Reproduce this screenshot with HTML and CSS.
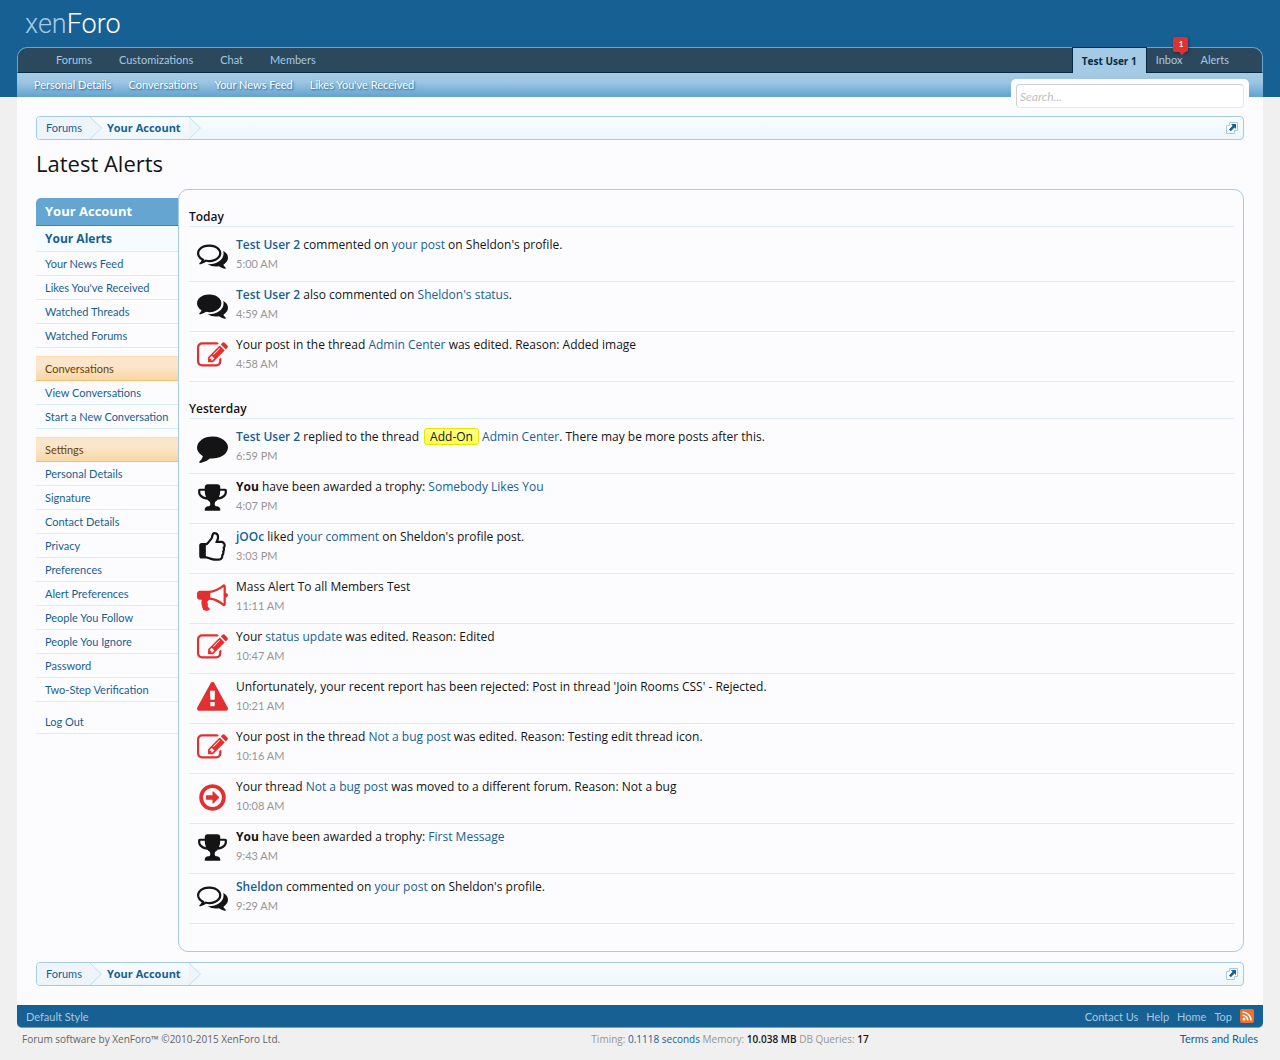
FILE: index.html
```html
<!DOCTYPE html>
<html lang="en">
<head>
<meta charset="utf-8">
<title>Latest Alerts | XenForo</title>
<link rel="stylesheet" href="styles.css">
</head>
<body>
<svg class="sprite" aria-hidden="true">
  <symbol id="comments-o" viewBox="0 0 1792 1792"><path d="M704 384q-153 0-286 52t-211.500 141-78.500 191q0 82 53 158t149 132l97 56-35 84q34-20 62-39l44-31 53 10q78 14 153 14 153 0 286-52t211.500-141 78.500-191-78.500-191-211.500-141-286-52zm0-128q191 0 353.500 68.500t256.500 186.500 94 257-94 257-256.500 186.500-353.500 68.500q-86 0-176-16-124 88-278 128-36 9-86 16h-3q-11 0-20.500-8t-11.500-21q-1-3-1-6.500t.5-6.500 2-6l2.500-5 3.500-5.500 4-5 4.500-5 4-4.500q5-6 23-25t26-29.500 22.500-29 25-38.500 20.500-44q-124-72-195-177t-71-224q0-139 94-257t256.500-186.500 353.500-68.500zm822 1169q10 24 20.500 44t25 38.500 22.500 29 26 29.500 23 25q1 1 4 4.500t4.500 5 4 5 3.500 5.500l2.500 5 2 6 .5 6.500-1 6.500q-3 14-13 22t-22 7q-50-7-86-16-154-40-278-128-90 16-176 16-271 0-472-132 58 4 88 4 161 0 309-45t264-129q125-92 192-212t67-254q0-77-23-152 129 71 204 178t75 230q0 120-71 224.500t-195 176.500z"/></symbol>
  <symbol id="comments" viewBox="0 0 1792 1792"><path d="M1408 768q0 139-94 257t-256.500 186.500-353.500 68.500q-86 0-176-16-124 88-278 128-36 9-86 16h-3q-11 0-20.500-8t-11.500-21q-1-3-1-6.500t.5-6.500 2-6l2.500-5 3.500-5.500 4-5 4.500-5 4-4.500q5-6 23-25t26-29.500 22.500-29 25-38.500 20.500-44q-124-72-195-177t-71-224q0-139 94-257t256.500-186.500 353.500-68.500 353.500 68.500 256.500 186.500 94 257zm384 256q0 120-71 224.500t-195 176.500q10 24 20.500 44t25 38.500 22.500 29 26 29.500 23 25q1 1 4 4.500t4.500 5 4 5 3.500 5.500l2.500 5 2 6 .5 6.500-1 6.500q-3 14-13 22t-22 7q-50-7-86-16-154-40-278-128-90 16-176 16-271 0-472-132 58 4 88 4 161 0 309-45t264-129q125-92 192-212t67-254q0-77-23-152 129 71 204 178t75 230z"/></symbol>
  <symbol id="comment" viewBox="0 0 1792 1792"><path d="M1792 896q0 174-120 321.500t-326 233-450 85.500q-70 0-145-8-198 175-460 242-49 14-114 22-17 2-30.500-9t-17.500-29v-1q-3-4-.5-12t2-10 4.500-9.500l6-9 7-8.500 8-9q7-8 31-34.500t34.500-38 31-39.500 32.500-51 27-59 26-76q-157-89-247.500-220t-90.500-281q0-130 71-248.500t191-204.500 286-136.500 348-50.500q244 0 450 85.500t326 233 120 321.500z"/></symbol>
  <symbol id="edit" viewBox="0 0 1792 1792"><path d="M888 1184l116-116-152-152-116 116v56h96v96h56zm440-720q-16-16-33 1l-350 350q-17 17-1 33t33-1l350-350q17-17 1-33zm80 594v190q0 119-84.500 203.500t-203.500 84.500h-832q-119 0-203.500-84.500t-84.500-203.500v-832q0-119 84.500-203.500t203.500-84.500h832q63 0 117 25 15 7 18 23 3 17-9 29l-49 49q-14 14-32 8-23-6-45-6h-832q-66 0-113 47t-47 113v832q0 66 47 113t113 47h832q66 0 113-47t47-113v-126q0-13 9-22l64-64q15-15 35-7t20 29zm-96-738l288 288-672 672h-288v-288zm444 132l-92 92-288-288 92-92q28-28 68-28t68 28l152 152q28 28 28 68t-28 68z"/></symbol>
  <symbol id="trophy" viewBox="0 0 1792 1792"><path d="M522 883q-74-162-74-371h-256v96q0 78 94.500 162t235.500 113zm1078-275v-96h-256q0 209-74 371 141-29 235.500-113t94.500-162zm128-128v128q0 71-41.500 143t-112 130-173 97.500-215.500 44.500q-42 54-95 95-38 34-52.500 72.500t-14.500 89.500q0 54 30.500 91t97.500 37q75 0 133.500 45.500t58.500 114.500v64q0 14-9 23t-23 9h-832q-14 0-23-9t-9-23v-64q0-69 58.500-114.500t133.500-45.500q67 0 97.500-37t30.500-91q0-51-14.500-89.500t-52.500-72.500q-53-41-95-95-113-5-215.500-44.500t-173-97.500-112-130-41.500-143v-128q0-40 28-68t68-28h288v-96q0-66 47-113t113-47h576q66 0 113 47t47 113v96h288q40 0 68 28t28 68z"/></symbol>
  <symbol id="thumbs-up" viewBox="0 0 1792 1792"><path d="M384 1344q0 26-19 45t-45 19-45-19-19-45 19-45 45-19 45 19 19 45zm1152-576q0-51-39-89.500t-89-38.500h-352q0-58 48-159.500t48-160.500q0-98-32-145t-128-47q-26 26-38 85t-30.500 125.500-59.500 109.500q-22 23-77 91-4 5-23 30t-31.500 41-34.500 42.500-40 44-38.500 35.500-40 27-35.500 9h-32v640h32q13 0 31.500 3t33 6.500 38 11 35 11.500 35.500 12.500 29 10.500q211 73 342 73h121q192 0 192-167 0-26-5-56 30-16 47.500-52.500t17.500-73.500-18-69q53-50 53-119 0-25-10-55.500t-25-47.500q32-1 53.500-47t21.500-81zm128-1q0 89-49 163 9 33 9 69 0 77-38 144 3 21 3 43 0 101-60 178 1 139-85 219.500t-227 80.500h-129q-96 0-189.500-22.500t-216.500-65.500q-116-40-138-40h-288q-53 0-90.500-37.500t-37.500-90.500v-640q0-53 37.500-90.500t90.500-37.500h274q36-24 137-155 58-75 107-128 24-25 35.500-85.500t30.500-126.500 62-108q39-37 90-37 84 0 151 32.500t102 101.500 35 186q0 93-48 192h176q104 0 180 76t76 179z"/></symbol>
  <symbol id="bullhorn" viewBox="0 0 1792 1792"><path d="M1664 640q53 0 90.500 37.500t37.500 90.500-37.500 90.500-90.500 37.500v384q0 52-38 90t-90 38q-417-347-812-380-58 19-91 66t-31 100.500 40 92.500q-20 33-23 65.500t6 58 33.500 55 48 50 61.500 50.500q-29 58-111.500 83t-168.500 11.500-132-55.500q-7-23-29.500-87.500t-32-94.500-23-89-15-101 3.500-98.500 22-110.500h-122q-66 0-113-47t-47-113v-192q0-66 47-113t113-47h480q435 0 896-384 52 0 90 38t38 90v384zm-128 604v-954q-394 302-768 343v270q377 42 768 341z"/></symbol>
  <symbol id="warning" viewBox="0 0 1792 1792"><path d="M1024 1375v-190q0-14-9.500-23.500t-22.500-9.500h-192q-13 0-22.500 9.500t-9.500 23.500v190q0 14 9.500 23.500t22.500 9.500h192q13 0 22.500-9.500t9.500-23.500zm-2-374l18-459q0-12-10-19-13-11-24-11h-220q-11 0-24 11-10 7-10 21l17 457q0 10 10 16.500t24 6.500h185q14 0 23.500-6.500t10.500-16.500zm-14-934l768 1408q35 63-2 126-17 29-46.500 46t-63.500 17h-1536q-34 0-63.500-17t-46.500-46q-37-63-2-126l768-1408q17-31 47-49t65-18 65 18 47 49z"/></symbol>
  <symbol id="moved" viewBox="0 0 1792 1792"><path d="M1280 896q0 14-9 23l-320 320q-9 9-23 9-13 0-22.500-9.500t-9.500-22.500v-192h-352q-13 0-22.500-9.500t-9.500-22.500v-192q0-13 9.500-22.500t22.500-9.500h352v-192q0-14 9-23t23-9q12 0 24 10l319 319q9 9 9 23zm160 0q0-148-73-273t-198-198-273-73-273 73-198 198-73 273 73 273 198 198 273 73 273-73 198-198 73-273zm224 0q0 209-103 385.500t-279.500 279.500-385.500 103-385.500-103-279.500-279.500-103-385.500 103-385.500 279.500-279.500 385.500-103 385.500 103 279.500 279.500 103 385.500z"/></symbol>
  <symbol id="chevron" viewBox="0 0 12 22"><path d="M0 0L11.500 11L0 22z" fill="#edf5fb"/><path d="M0 0L11.500 11L0 22" fill="none" stroke="#c3def0"/></symbol>
  <symbol id="popout" viewBox="0 0 14 14"><path d="M4.500 4.500h-3v8h8v-3M4.500 4.500v-3h8v8h-3" fill="#fcfeff" stroke="#a5cae4"/><path d="M6 3h5v5L9.500 6.500 5.800 10.200 4 8.400 7.600 4.700z" fill="#176093"/></symbol>
</svg>

<header class="header">
  <a class="logo" href="#">xen<span>Foro</span></a>
  <nav class="navigation">
    <div class="tabs">
      <ul class="tab-list">
        <li><a href="#">Forums</a></li>
        <li><a href="#">Customizations</a></li>
        <li><a href="#">Chat</a></li>
        <li><a href="#">Members</a></li>
      </ul>
      <ul class="tab-list visitor">
        <li class="selected"><a href="#">Test User 1</a></li>
        <li><a href="#">Inbox</a><strong class="balloon">1</strong></li>
        <li><a href="#">Alerts</a></li>
      </ul>
    </div>
    <ul class="sub-links">
      <li><a href="#">Personal Details</a></li>
      <li><a href="#">Conversations</a></li>
      <li><a href="#">Your News Feed</a></li>
      <li><a href="#">Likes You've Received</a></li>
    </ul>
    <form class="search"><input type="search" placeholder="Search..." aria-label="Search"></form>
  </nav>
</header>

<main class="page">
  <nav class="breadcrumb" aria-label="Breadcrumb">
    <a href="#">Forums</a><svg class="chevron"><use href="#chevron"/></svg>
    <a class="current" href="#">Your Account</a><svg class="chevron"><use href="#chevron"/></svg>
    <a class="jump" href="#" aria-label="Open quick navigation"><svg><use href="#popout"/></svg></a>
  </nav>
  <h1>Latest Alerts</h1>
  <div class="columns">
    <aside class="sidebar">
      <h2>Your Account</h2>
      <ul>
        <li class="active"><a href="#">Your Alerts</a></li>
        <li><a href="#">Your News Feed</a></li>
        <li><a href="#">Likes You've Received</a></li>
        <li><a href="#">Watched Threads</a></li>
        <li><a href="#">Watched Forums</a></li>
      </ul>
      <h3>Conversations</h3>
      <ul>
        <li><a href="#">View Conversations</a></li>
        <li><a href="#">Start a New Conversation</a></li>
      </ul>
      <h3>Settings</h3>
      <ul>
        <li><a href="#">Personal Details</a></li>
        <li><a href="#">Signature</a></li>
        <li><a href="#">Contact Details</a></li>
        <li><a href="#">Privacy</a></li>
        <li><a href="#">Preferences</a></li>
        <li><a href="#">Alert Preferences</a></li>
        <li><a href="#">People You Follow</a></li>
        <li><a href="#">People You Ignore</a></li>
        <li><a href="#">Password</a></li>
        <li><a href="#">Two-Step Verification</a></li>
      </ul>
      <ul class="log-out">
        <li><a href="#">Log Out</a></li>
      </ul>
    </aside>
    <section class="panel">
      <h2>Today</h2>
      <ol>
        <li><svg class="icon"><use href="#comments-o"/></svg><div><p><a class="user" href="#">Test User 2</a> commented on <a href="#">your post</a> on Sheldon's profile.</p><time>5:00 AM</time></div></li>
        <li><svg class="icon"><use href="#comments"/></svg><div><p><a class="user" href="#">Test User 2</a> also commented on <a href="#">Sheldon's status</a>.</p><time>4:59 AM</time></div></li>
        <li><svg class="icon red"><use href="#edit"/></svg><div><p>Your post in the thread <a href="#">Admin Center</a> was edited. Reason: Added image</p><time>4:58 AM</time></div></li>
      </ol>
      <h2>Yesterday</h2>
      <ol>
        <li><svg class="icon"><use href="#comment"/></svg><div><p><a class="user" href="#">Test User 2</a> replied to the thread <span class="prefix">Add-On</span> <a href="#">Admin Center</a>. There may be more posts after this.</p><time>6:59 PM</time></div></li>
        <li><svg class="icon"><use href="#trophy"/></svg><div><p><b>You</b> have been awarded a trophy: <a href="#">Somebody Likes You</a></p><time>4:07 PM</time></div></li>
        <li><svg class="icon"><use href="#thumbs-up"/></svg><div><p><a class="user" href="#">jOOc</a> liked <a href="#">your comment</a> on Sheldon's profile post.</p><time>3:03 PM</time></div></li>
        <li><svg class="icon red"><use href="#bullhorn"/></svg><div><p>Mass Alert To all Members Test</p><time>11:11 AM</time></div></li>
        <li><svg class="icon red"><use href="#edit"/></svg><div><p>Your <a href="#">status update</a> was edited. Reason: Edited</p><time>10:47 AM</time></div></li>
        <li><svg class="icon red"><use href="#warning"/></svg><div><p>Unfortunately, your recent report has been rejected: Post in thread 'Join Rooms CSS' - Rejected.</p><time>10:21 AM</time></div></li>
        <li><svg class="icon red"><use href="#edit"/></svg><div><p>Your post in the thread <a href="#">Not a bug post</a> was edited. Reason: Testing edit thread icon.</p><time>10:16 AM</time></div></li>
        <li><svg class="icon red"><use href="#moved"/></svg><div><p>Your thread <a href="#">Not a bug post</a> was moved to a different forum. Reason: Not a bug</p><time>10:08 AM</time></div></li>
        <li><svg class="icon"><use href="#trophy"/></svg><div><p><b>You</b> have been awarded a trophy: <a href="#">First Message</a></p><time>9:43 AM</time></div></li>
        <li><svg class="icon"><use href="#comments-o"/></svg><div><p><a class="user" href="#">Sheldon</a> commented on <a href="#">your post</a> on Sheldon's profile.</p><time>9:29 AM</time></div></li>
      </ol>
    </section>
  </div>
  <nav class="breadcrumb" aria-label="Breadcrumb">
    <a href="#">Forums</a><svg class="chevron"><use href="#chevron"/></svg>
    <a class="current" href="#">Your Account</a><svg class="chevron"><use href="#chevron"/></svg>
    <a class="jump" href="#" aria-label="Open quick navigation"><svg><use href="#popout"/></svg></a>
  </nav>
</main>

<footer>
  <div class="footer-bar">
    <a href="#">Default Style</a>
    <div class="footer-links">
      <a href="#">Contact Us</a>
      <a href="#">Help</a>
      <a href="#">Home</a>
      <a href="#">Top</a>
      <a class="rss" href="#" aria-label="RSS"><svg viewBox="0 0 14 14"><rect width="14" height="14" rx="2" fill="#f0702a"/><circle cx="4" cy="10" r="1.500" fill="#fff"/><path d="M2.500 6.200a5.300 5.300 0 0 1 5.300 5.300M2.500 3a8.500 8.500 0 0 1 8.500 8.500" fill="none" stroke="#fff" stroke-width="1.600"/></svg></a>
    </div>
  </div>
  <div class="legal">
    <span>Forum software by XenForo™ ©2010-2015 XenForo Ltd.</span>
    <span class="debug">Timing: <a href="#">0.1118 seconds</a> Memory: <b>10.038 MB</b> DB Queries: <b>17</b></span>
    <a class="terms" href="#">Terms and Rules</a>
  </div>
</footer>
</body>
</html>
```
FILE: styles.css
```css
* { box-sizing: border-box; }

body {
  margin: 0;
  background: #f0f0f0;
  color: #141414;
  font: 11px/16px Lato, "Trebuchet MS", sans-serif;
}

a { color: #176093; text-decoration: none; }
ul, ol { list-style: none; margin: 0; padding: 0; }
h1, h2, h3, p { margin: 0; }
.sprite { display: none; }

/* Header and navigation */
.header { background: #176093; padding: 0 17px; }

.logo {
  display: block;
  height: 47px;
  padding: 5px 8px;
  color: #a5cae4;
  font: 300 27px/38px Roboto, sans-serif;
}
.logo span { color: #fff; }

.navigation { position: relative; }

.tabs {
  display: flex;
  justify-content: space-between;
  height: 26px;
  padding: 0 24px;
  background: #2b485c;
  border: 1px solid #65a5d1;
  border-bottom-color: #032a46;
  border-radius: 10px 10px 0 0;
}
.tab-list { display: flex; }
.tab-list li { position: relative; }
.tab-list a { display: block; padding: 0 14px; color: #a5cae4; line-height: 24px; }
.tab-list:first-child li + li a { padding-left: 13px; }
.tab-list.visitor a { padding: 0 9px; }
.visitor .selected {
  height: 26px;
  margin-top: -1px;
  background: #a5cae4;
  border: 1px solid #032a46;
  border-bottom: 0;
}
.tab-list .selected a { color: #032a46; font: 700 10px/26px "Open Sans", sans-serif; }

.balloon {
  position: absolute;
  top: -11px;
  right: 3px;
  width: 15px;
  background: #e03030;
  border-radius: 2px;
  box-shadow: 1px 1px 3px rgba(0, 0, 0, .4);
  color: #fff;
  font-size: 8px;
  line-height: 15px;
  text-align: center;
}
.balloon::after {
  content: "";
  position: absolute;
  top: 100%;
  left: 6px;
  border: 3px solid transparent;
  border-top-color: #e03030;
  border-bottom: 0;
}

.sub-links {
  display: flex;
  gap: 17px;
  height: 24px;
  padding: 0 17px;
  background: linear-gradient(#a5cae4, #9cc5e1 40%, #65a5d1);
  border-bottom: 1px solid #65a5d1;
}
.sub-links a { color: #fff; line-height: 24px; text-shadow: 1px 1px 2px #176093; }

.search {
  position: absolute;
  top: 32px;
  right: 14px;
  width: 238px;
  padding: 5px 5px 0;
  background: #fcfcff;
  border-radius: 5px 5px 0 0;
}
.search input {
  display: block;
  width: 100%;
  height: 24px;
  padding: 0 3px;
  background: #fff;
  border: 1px solid #d0d0d0;
  border-right-color: #e7e7e7;
  border-bottom-color: #e7e7e7;
  border-radius: 4px;
  font: italic 12px Lato, sans-serif;
}
.search input::placeholder { color: #c0c0c0; }

/* Page */
.page { margin: 0 17px; padding: 19px; background: #fcfcff; }

.breadcrumb {
  display: flex;
  height: 24px;
  border: 1px solid #a5cae4;
  border-radius: 4px;
  background: linear-gradient(#f8fcff, #edf6fb);
  overflow: hidden;
}
.breadcrumb a { padding: 0 8px 0 9px; background: #edf5fb; line-height: 22px; }
.breadcrumb .current { padding: 0 8px 0 5px; background: none; font: 700 11px/22px "Open Sans", sans-serif; }
.chevron { width: 12px; height: 22px; }
.breadcrumb .jump { margin-left: auto; padding: 4px; background: none; }
.jump svg { display: block; width: 14px; height: 14px; }

h1 { padding: 7px 0 10px; font: 400 22px/32px "Open Sans", sans-serif; }

.columns { display: flex; align-items: flex-start; margin-bottom: 10px; }

.sidebar { flex: 0 0 142px; padding-top: 9px; }
.sidebar h2 {
  height: 28px;
  padding-left: 9px;
  background: #65a5d1;
  border-bottom: 1px solid #3e86b8;
  border-radius: 5px 0 0 0;
  color: #fff;
  font: 700 13px/27px "Open Sans", sans-serif;
}
.sidebar a {
  display: block;
  padding-left: 9px;
  border-bottom: 1px solid #d7edfc;
  line-height: 23px;
  white-space: nowrap;
}
.sidebar .active a { background: #f5fbff; font: 700 12px/25px "Open Sans", sans-serif; }
.sidebar h3 {
  height: 25px;
  margin-top: 8px;
  padding-left: 9px;
  background: linear-gradient(#fbe6cb 40%, #f9d6a6);
  border-top: 1px solid #f9dcb4;
  border-bottom: 1px solid #f9bc6d;
  color: #6d3f03;
  font-size: 11px;
  font-weight: 400;
  line-height: 24px;
}
.log-out { margin-top: 8px; }

.panel {
  flex: 1;
  padding: 17px 9px 27px 10px;
  border: 1px solid #a5cae4;
  border-radius: 10px;
  font: 12px/20px "Open Sans", sans-serif;
}
.panel h2 {
  border-bottom: 1px solid #d7edfc;
  font-size: 12px;
  font-weight: 600;
  line-height: 19px;
}
.panel ol + h2 { margin-top: 17px; }
.panel li {
  display: flex;
  gap: 8px;
  height: 50px;
  padding: 3px 0 0 8px;
  border-bottom: 1px solid #d7edfc;
}
.panel li:first-child { height: 55px; padding-top: 8px; }
.icon { flex: none; width: 31px; height: 31px; margin-top: 5px; fill: #141414; }
.red { fill: #e03030; }
.user { font-weight: 600; }
.prefix {
  display: inline-block;
  margin-left: 2px;
  padding: 0 5px;
  background: linear-gradient(#ffff90, #ffff50);
  border: 1px solid #e6e600;
  border-radius: 3px;
  line-height: 15px;
}
time { display: block; color: #969696; font: 11px/17px Lato, sans-serif; }

/* Footer */
footer { padding: 0 17px; }
.footer-bar {
  display: flex;
  justify-content: space-between;
  height: 23px;
  padding: 0 9px;
  background: #176093;
  border-bottom: 1px solid #65a5d1;
  border-radius: 0 0 5px 5px;
  line-height: 23px;
}
.footer-bar a { color: #a5cae4; }
.footer-links { display: flex; gap: 8px; }
.footer-bar .rss { padding: 4px 0; }
.rss svg { display: block; width: 14px; height: 14px; }

.legal {
  display: flex;
  justify-content: space-between;
  padding: 3px 5px 13px;
  color: #646464;
  font: 10px/16px "Open Sans", sans-serif;
}
.debug { color: #969696; }
.debug b { color: #141414; font-weight: 600; }
.terms { font: 11px/16px Lato, sans-serif; }
```
